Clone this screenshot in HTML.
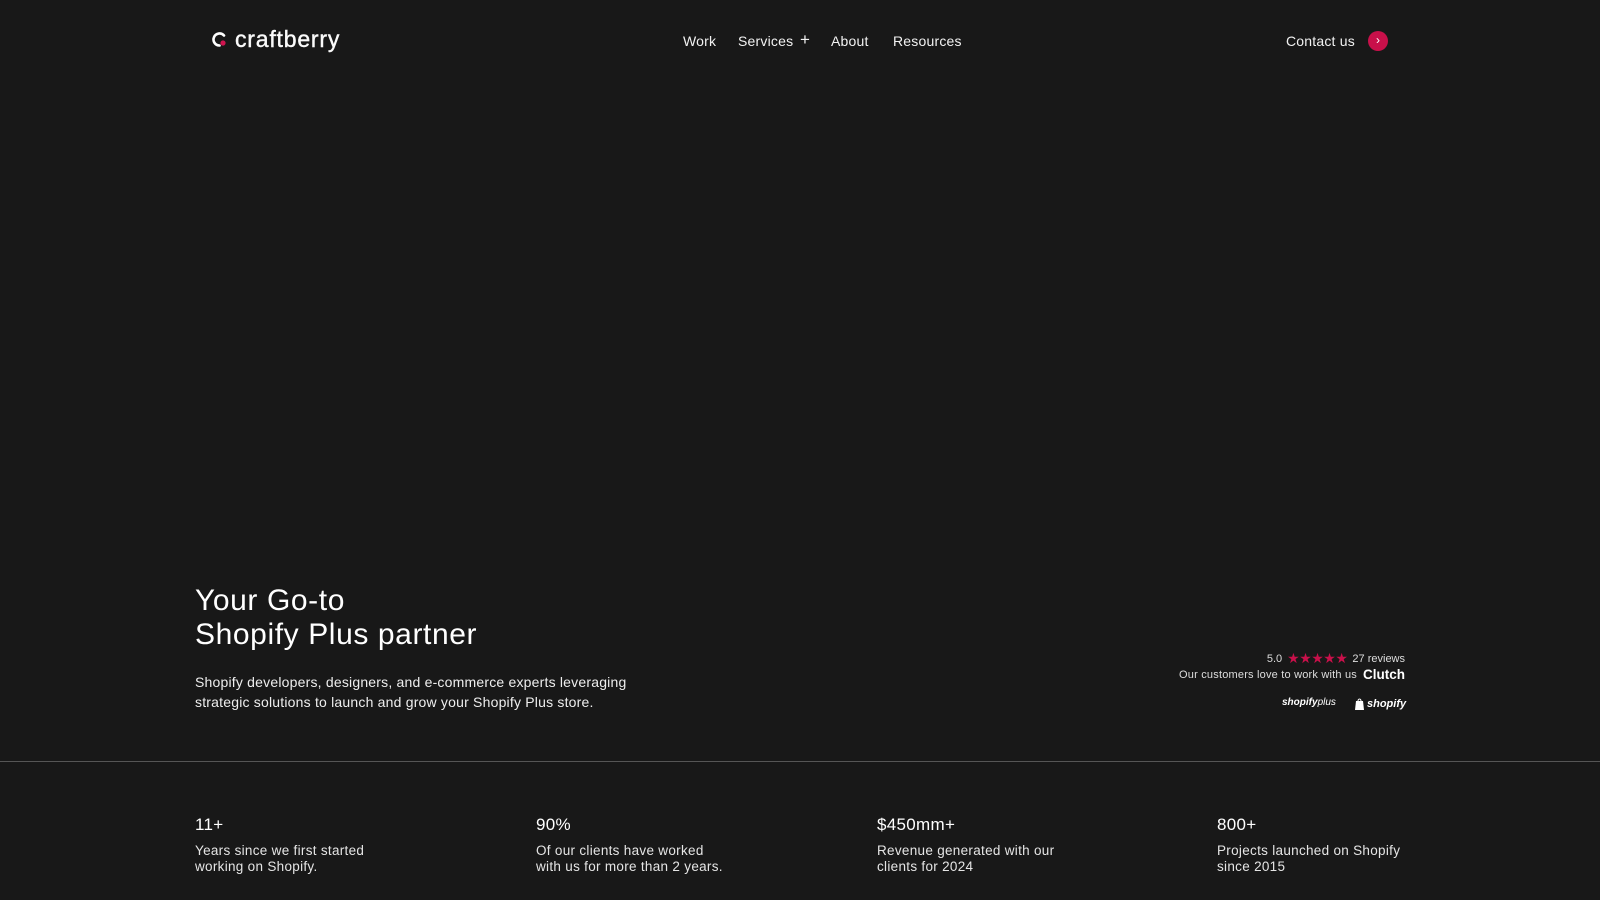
<!DOCTYPE html>
<html><head><meta charset="utf-8"><style>
*{margin:0;padding:0;box-sizing:border-box}
body{width:1600px;height:900px;background:#181818;color:#fff;font-family:"Liberation Sans",sans-serif;position:relative;overflow:hidden}
.a{position:absolute;white-space:nowrap}
.nav{font-size:14px;color:#f2f2f2;letter-spacing:0.2px}
.n{font-size:17px;letter-spacing:0.3px}
.d{font-size:13.5px;line-height:16px;color:#e5e5e5;letter-spacing:0.3px}
</style></head><body>
<div class="a" style="left:211px;top:26px;display:flex;align-items:center;gap:7px">
<svg width="17" height="17" viewBox="0 0 17 17"><path d="M13 4.5A6 6 0 1 0 8.5 14.5" fill="none" stroke="#fff" stroke-width="2.6" stroke-linecap="round"/><circle cx="12" cy="12" r="2.6" fill="#d0144f"/></svg>
<span style="font-size:23px;letter-spacing:0.8px;color:#fafafa;-webkit-text-stroke:0.4px #fafafa">craftberry</span></div>
<div class="a nav" style="left:683px;top:33px">Work</div>
<div class="a nav" style="left:738px;top:33px">Services<span style="position:absolute;left:62px;top:-3px;font-size:17px;font-weight:300">+</span></div>
<div class="a nav" style="left:831px;top:33px">About</div>
<div class="a nav" style="left:893px;top:33px">Resources</div>
<div class="a nav" style="left:1286px;top:33px">Contact us</div>
<div class="a" style="left:1368px;top:31px;width:20px;height:20px;border-radius:50%;background:#c8104a;color:#fff;font-size:12px;text-align:center;line-height:19px">›</div>

<div class="a" style="left:195px;top:584px;font-size:30px;line-height:34px;letter-spacing:0.6px">Your Go-to<br>Shopify Plus partner</div>
<div class="a" style="left:195px;top:672px;font-size:14px;line-height:20px;color:#eee;letter-spacing:0.2px">Shopify developers, designers, and e-commerce experts leveraging<br>strategic solutions to launch and grow your Shopify Plus store.</div>

<div class="a" style="right:195px;top:650px;font-size:11px;color:#ddd;display:flex;align-items:center;gap:5px">5.0 <span style="color:#c8104a;font-size:14px;letter-spacing:-0.5px">★★★★★</span> 27 reviews</div>
<div class="a" style="right:195px;top:667px;font-size:11px;color:#ddd;display:flex;align-items:center;gap:6px;letter-spacing:0.2px">Our customers love to work with us <b style="color:#fff;font-size:13.5px;letter-spacing:0">Clutch</b></div>
<div class="a" style="left:1282px;top:697px;font-size:10px;font-style:italic;font-weight:bold;color:#fff">shopify<span style="font-weight:normal">plus</span></div>
<div class="a" style="left:1354px;top:698px;font-size:11px;font-style:italic;font-weight:bold;color:#fff;display:flex;align-items:center;gap:2px"><svg width="11" height="12" viewBox="0 0 11 12"><path d="M2 3h7l1 9H1z" fill="#fff"/><path d="M4 3a1.5 2 0 0 1 3 0" stroke="#fff" fill="none"/></svg>shopify</div>

<div class="a" style="left:0;top:761px;width:1600px;height:1px;background:#555"></div>

<div class="a n" style="left:195px;top:815px">11+</div>
<div class="a d" style="left:195px;top:843px">Years since we first started<br>working on Shopify.</div>
<div class="a n" style="left:536px;top:815px">90%</div>
<div class="a d" style="left:536px;top:843px">Of our clients have worked<br>with us for more than 2 years.</div>
<div class="a n" style="left:877px;top:815px">$450mm+</div>
<div class="a d" style="left:877px;top:843px">Revenue generated with our<br>clients for 2024</div>
<div class="a n" style="left:1217px;top:815px">800+</div>
<div class="a d" style="left:1217px;top:843px">Projects launched on Shopify<br>since 2015</div>
</body></html>
